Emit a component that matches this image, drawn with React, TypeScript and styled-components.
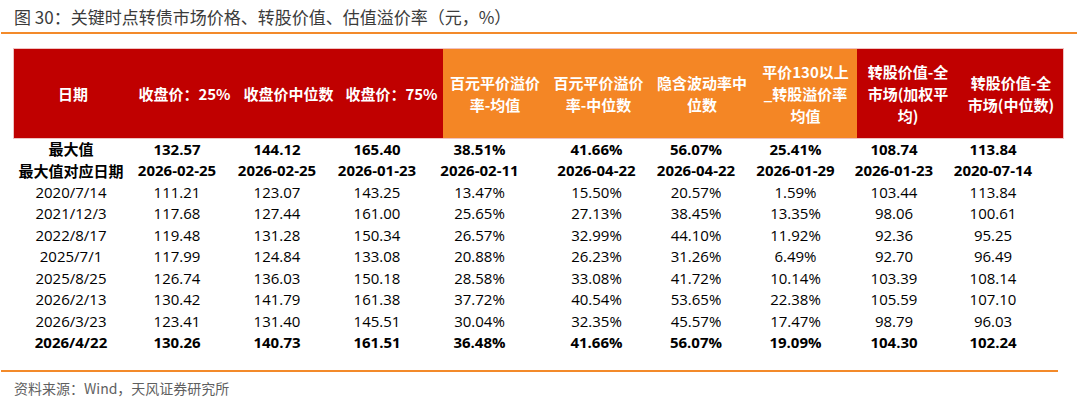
import React from "react";
import styled, { createGlobalStyle } from "styled-components";

const GlobalStyle = createGlobalStyle`
  html, body { margin: 0; padding: 0; background: #ffffff; }
  body { font-family: "Noto Sans CJK SC", "Noto Sans", sans-serif; }
`;

const Page = styled.div`
  width: 1080px;
  height: 407px;
  background: #fff;
  display: flex;
  flex-direction: column;
`;

const Title = styled.div`
  height: 32px;
  line-height: 33px;
  padding-left: 14px;
  font-size: 17px;
  color: #3b3b3b;
  font-family: "Noto Sans CJK SC", sans-serif;
  white-space: nowrap;
`;

const Rule = styled.div<{ $width: number }>`
  height: 2px;
  margin-left: 1px;
  width: ${(p) => p.$width}px;
  background: #f38a2a;
`;

const Table = styled.div`
  margin-top: 15px;
  margin-left: 14px;
  width: 1049px;
  display: flex;
  flex-direction: column;
`;

const HeaderRow = styled.div`
  display: grid;
  grid-template-columns: 118px 105px 103px 103px 104px 103px 104px 103px 102px 104px;
  height: 89px;
  box-shadow: 0 0 0 1px rgba(210, 80, 80, 0.35);
`;

const HeadCell = styled.div<{ $tone: "red" | "orange" }>`
  background: ${(p) => (p.$tone === "red" ? "#c00000" : "#f48625")};
  color: #fff;
  font-weight: 700;
  font-size: 15px;
  line-height: 22px;
  font-family: "Noto Sans CJK SC", sans-serif;
  display: flex;
  flex-direction: column;
  align-items: center;
  justify-content: center;
  text-align: center;
  white-space: nowrap;
`;

const BodyRow = styled.div`
  display: grid;
  grid-template-columns: 114px 98px 102px 98px 107px 127px 72px 127px 70px 128px;
  height: 21.5px;
`;

const BodyCell = styled.div<{ $bold?: boolean }>`
  display: flex;
  align-items: center;
  justify-content: center;
  white-space: nowrap;
  font-size: 15px;
  color: #000;
  font-weight: ${(p) => (p.$bold ? 700 : 400)};
  font-family: "Open Sans", "Noto Sans CJK SC", sans-serif;
`;

const Footer = styled.div`
  margin-top: 17px;
`;

const Source = styled.div`
  margin-top: 5px;
  padding-left: 14px;
  font-size: 14px;
  line-height: 22px;
  color: #5f5f5f;
  font-family: "Noto Sans CJK SC", sans-serif;
`;

type Head = { lines: string[]; tone: "red" | "orange" };

const headers: Head[] = [
  { lines: ["日期"], tone: "red" },
  { lines: ["收盘价：25%"], tone: "red" },
  { lines: ["收盘价中位数"], tone: "red" },
  { lines: ["收盘价：75%"], tone: "red" },
  { lines: ["百元平价溢价", "率-均值"], tone: "orange" },
  { lines: ["百元平价溢价", "率-中位数"], tone: "orange" },
  { lines: ["隐含波动率中", "位数"], tone: "orange" },
  { lines: ["平价130以上", "_转股溢价率", "均值"], tone: "orange" },
  { lines: ["转股价值-全", "市场(加权平", "均)"], tone: "red" },
  { lines: ["转股价值-全", "市场(中位数)"], tone: "red" },
];

const rows: { bold?: boolean; cells: string[] }[] = [
  { bold: true, cells: ["最大值", "132.57", "144.12", "165.40", "38.51%", "41.66%", "56.07%", "25.41%", "108.74", "113.84"] },
  { bold: true, cells: ["最大值对应日期", "2026-02-25", "2026-02-25", "2026-01-23", "2026-02-11", "2026-04-22", "2026-04-22", "2026-01-29", "2026-01-23", "2020-07-14"] },
  { cells: ["2020/7/14", "111.21", "123.07", "143.25", "13.47%", "15.50%", "20.57%", "1.59%", "103.44", "113.84"] },
  { cells: ["2021/12/3", "117.68", "127.44", "161.00", "25.65%", "27.13%", "38.45%", "13.35%", "98.06", "100.61"] },
  { cells: ["2022/8/17", "119.48", "131.28", "150.34", "26.57%", "32.99%", "44.10%", "11.92%", "92.36", "95.25"] },
  { cells: ["2025/7/1", "117.99", "124.84", "133.08", "20.88%", "26.23%", "31.26%", "6.49%", "92.70", "96.49"] },
  { cells: ["2025/8/25", "126.74", "136.03", "150.18", "28.58%", "33.08%", "41.72%", "10.14%", "103.39", "108.14"] },
  { cells: ["2026/2/13", "130.42", "141.79", "161.38", "37.72%", "40.54%", "53.65%", "22.38%", "105.59", "107.10"] },
  { cells: ["2026/3/23", "123.41", "131.40", "145.51", "30.04%", "32.35%", "45.57%", "17.47%", "98.79", "96.03"] },
  { bold: true, cells: ["2026/4/22", "130.26", "140.73", "161.51", "36.48%", "41.66%", "56.07%", "19.09%", "104.30", "102.24"] },
];

export default function App() {
  return (
    <Page>
      <GlobalStyle />
      <Title>图 30：关键时点转债市场价格、转股价值、估值溢价率（元，%）</Title>
      <Rule $width={1076} />
      <Table>
        <HeaderRow>
          {headers.map((h, i) => (
            <HeadCell key={i} $tone={h.tone}>
              {h.lines.map((l, j) => (
                <span key={j}>{l}</span>
              ))}
            </HeadCell>
          ))}
        </HeaderRow>
        {rows.map((r, i) => (
          <BodyRow key={i}>
            {r.cells.map((c, j) => (
              <BodyCell key={j} $bold={r.bold}>
                {c}
              </BodyCell>
            ))}
          </BodyRow>
        ))}
      </Table>
      <Footer>
        <Rule $width={1057} />
        <Source>资料来源：Wind，天风证券研究所</Source>
      </Footer>
    </Page>
  );
}
